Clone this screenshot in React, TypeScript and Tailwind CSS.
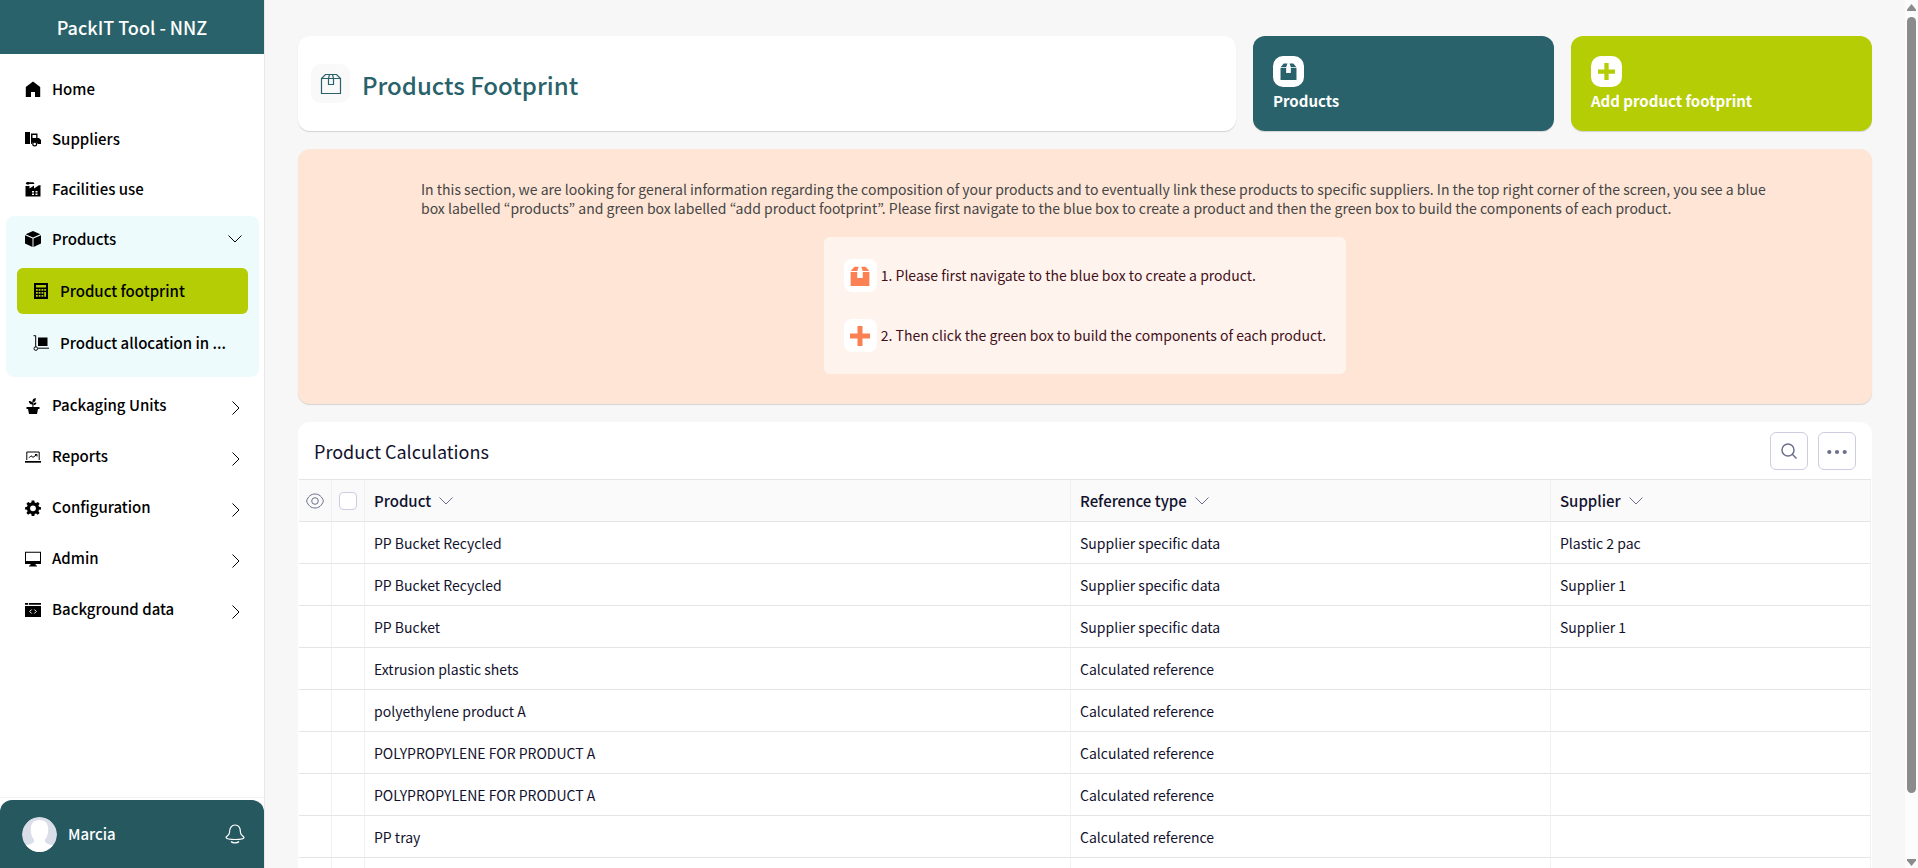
import React from "react";

type IconProps = { className?: string };

const svg = (className: string | undefined, children: React.ReactNode, box = 16) => (
  <svg viewBox={`0 0 ${box} ${box}`} className={className} fill="currentColor" aria-hidden="true">
    {children}
  </svg>
);

const HomeIcon = ({ className }: IconProps) => svg(className, <path d="M8 0.6 15.2 6v10H10v-5H6v5H.8V6z" />);

const TruckIcon = ({ className }: IconProps) =>
  svg(
    className,
    <>
      <path d="M0 1h5v12H0z" />
      <path fillRule="evenodd" d="M6 2.5h6.5V7H14l2 2v4h-3.200a3.400 3.400 0 0 0-6.300 0H6zM7.500 4v3h3.700V4z" />
      <circle cx="9.700" cy="13" r="1.900" fill="none" stroke="currentColor" strokeWidth="1.200" />
    </>,
  );

const FactoryIcon = ({ className }: IconProps) =>
  svg(
    className,
    <>
      <path d="M.8 2.500C.8 1 3 .6 4 1.200h4.500L9.500 3H4.500C4 3.600 1.500 4 .8 2.500z" />
      <path fillRule="evenodd" d="M.5 5h4v2.500L9 4.500v3L13.500 4.500l2-.5v11.500H.5zM7 10v1.600h2V10zm3.500 0v1.600h2V10zM7 12.400V14h2v-1.600zm3.500 0V14h2v-1.600z" />
    </>,
  );

const BoxIcon = ({ className }: IconProps) =>
  svg(
    className,
    <>
      <path d="M8 0l7.300 3.200L8 6.600.7 3.200z" />
      <path d="M0 4.200l7.500 3.400V16L0 12.400z" />
      <path d="M16 4.200L8.500 7.600V16L16 12.400z" />
    </>,
  );

const CalculatorIcon = ({ className }: IconProps) =>
  svg(
    className,
    <path
      fillRule="evenodd"
      d="M1 0h14v16H1zM3 2v2.500h10V2zM3 6v1.800h1.800V6zm2.700 0v1.800h1.800V6zm2.800 0v1.800h1.800V6zm2.700 0v1.800H13V6zM3 9v1.800h1.800V9zm2.700 0v1.800h1.800V9zm2.800 0v1.800h1.800V9zM3 12v1.800h1.800V12zm2.700 0v1.800h1.800V12zm2.800 0v1.800h1.800V12zm2.700-3v4.800H13V9z"
    />,
  );

const TrolleyIcon = ({ className }: IconProps) =>
  svg(
    className,
    <>
      <path d="M5 2.500h9.500V11H5z" />
      <path d="M.5.7h2.200v11.500M5 13.200h11" fill="none" stroke="currentColor" />
      <circle cx="2.800" cy="13.600" r="1.800" fill="none" stroke="currentColor" />
    </>,
  );

const PlantIcon = ({ className }: IconProps) =>
  svg(
    className,
    <>
      <path d="M1.500 9h13v2H13l-1 5H4l-1-5H1.500z" />
      <path d="M7.400 9V6.500C5 6.500 4 5.200 3.800 3c2 0 3 .6 3.600 1.700V3.500C7.400 1.500 8.500.3 10.800 0c.2 2.500-.8 4-2.400 4.300V9z" />
      <path d="M8.400 6c.6-1.200 1.500-1.600 3-1.600-.2 1.700-1.200 2.700-3 2.800z" />
    </>,
  );

const ReportsIcon = ({ className }: IconProps) =>
  svg(
    className,
    <>
      <path d="M0 12h16v1.700H0z" />
      <path d="M1.800 11V3h12.400v8M4 8.800l2-2 2 1.500L12 5.500M10 5.500h2v2" fill="none" stroke="currentColor" />
    </>,
  );

const GearIcon = ({ className }: IconProps) =>
  svg(
    className,
    <path
      fillRule="evenodd"
      d="M6.700.5h2.600l.4 2 1.300.6 1.800-1.200 1.800 1.800-1.200 1.800.6 1.300 2 .4v2.200l-2 .4-.6 1.400 1.200 1.700-1.800 1.800-1.800-1.200-1.300.6-.4 2H6.700l-.4-2-1.300-.6-1.800 1.200-1.800-1.800 1.200-1.700L2 9.800l-1.900-.4V7.200L2 6.800l.6-1.300-1.200-1.800 1.800-1.800L5 3.100l1.300-.6zM8 5.400a2.900 2.900 0 1 0 0 5.800 2.900 2.900 0 0 0 0-5.800z"
    />,
  );

const MonitorIcon = ({ className }: IconProps) =>
  svg(className, <path fillRule="evenodd" d="M0 .8h16V13h-5.500l.3 1.500H12v1H4v-1h1.200L5.500 13H0zM1 1.800V10h14V1.800z" />);

const CodeIcon = ({ className }: IconProps) =>
  svg(
    className,
    <>
      <path d="M0 1h3.200v1.800H0zM4 1h12v1.800H4z" />
      <path d="M0 4h16v11H0z" />
      <path d="M6.700 7.500l-2 2 2 2M9.300 7.500l2 2-2 2" fill="none" stroke="#fff" />
    </>,
  );

const PackageIcon = ({ className }: IconProps) =>
  svg(
    className,
    <>
      <path d="M3.500.5H7L5.800 4H.5zM12.500.5H9L10.200 4h5.300z" />
      <path d="M.5 4.800h5.300V9.500h4.400V4.800h5.300V16H.5z" />
    </>,
  );

const PlusIcon = ({ className }: IconProps) => svg(className, <path d="M6 0h4v6h6v4h-6v6H6v-6H0V6h6z" />);

const OutlinePackageIcon = ({ className }: IconProps) => (
  <svg viewBox="0 0 22 22" className={className} fill="none" stroke="currentColor" strokeWidth="1.200" aria-hidden="true">
    <path d="M1.500 5.500h19v15h-19zM1.500 5.500l4-4h11l4 4M9.500 1.500l-1 4v6h5v-6l-1-4" />
  </svg>
);

const Chevron = ({ className }: IconProps) => (
  <svg viewBox="0 0 14 14" className={className} fill="none" stroke="currentColor" aria-hidden="true">
    <path d="M.5 3.500L7 10l6.500-6.500" />
  </svg>
);

type NavEntry = { label: string; Icon: (p: IconProps) => React.ReactElement };

const topItems: NavEntry[] = [
  { label: "Home", Icon: HomeIcon },
  { label: "Suppliers", Icon: TruckIcon },
  { label: "Facilities use", Icon: FactoryIcon },
];

const bottomItems: NavEntry[] = [
  { label: "Packaging Units", Icon: PlantIcon },
  { label: "Reports", Icon: ReportsIcon },
  { label: "Configuration", Icon: GearIcon },
  { label: "Admin", Icon: MonitorIcon },
  { label: "Background data", Icon: CodeIcon },
];

const rows: [string, string, string][] = [
  ["PP Bucket Recycled", "Supplier specific data", "Plastic 2 pac"],
  ["PP Bucket Recycled", "Supplier specific data", "Supplier 1"],
  ["PP Bucket", "Supplier specific data", "Supplier 1"],
  ["Extrusion plastic shets", "Calculated reference", ""],
  ["polyethylene product A", "Calculated reference", ""],
  ["POLYPROPYLENE FOR PRODUCT A", "Calculated reference", ""],
  ["POLYPROPYLENE FOR PRODUCT A", "Calculated reference", ""],
  ["PP tray", "Calculated reference", ""],
  ["", "", ""],
];

function Sidebar() {
  return (
    <aside className="flex w-[265px] shrink-0 flex-col border-r border-[#e8e8e8] bg-white font-medium text-black">
      <div className="flex h-[54px] shrink-0 items-center justify-center bg-[#29626a] pb-px text-lg text-white">PackIT Tool - NNZ</div>
      <nav className="flex min-h-0 flex-1 flex-col pt-[10px] text-[15px]">
        {topItems.map(({ label, Icon }) => (
          <a key={label} href="#" className="flex h-[50px] items-center gap-[11px] pl-[25px]">
            <Icon className="size-4" />
            {label}
          </a>
        ))}
        <div className="mt-[2px] mr-[5px] ml-[6px] h-[161px] rounded-lg bg-[#eefbfc] px-[11px]">
          <button type="button" className="flex h-[46px] w-full items-center gap-[11px] pr-[6px] pl-2 text-left">
            <BoxIcon className="size-4" />
            <span className="flex-1">Products</span>
            <Chevron className="size-[14px]" />
          </button>
          <a href="#" className="mt-[6px] flex h-[46px] items-center gap-[11px] rounded-md bg-[#b4cd05] px-4">
            <CalculatorIcon className="size-4" />
            Product footprint
          </a>
          <a href="#" className="mt-[6px] flex h-[46px] items-center gap-[11px] px-4">
            <TrolleyIcon className="size-4 shrink-0" />
            Product allocation in ...
          </a>
        </div>
        <div className="pt-[3px]">
          {bottomItems.map(({ label, Icon }) => (
            <button key={label} type="button" className="flex h-[51px] w-full items-center gap-[11px] pr-[21px] pl-[25px] text-left">
              <Icon className="size-4" />
              <span className="flex-1">{label}</span>
              <Chevron className="mt-1 size-[14px] -rotate-90" />
            </button>
          ))}
        </div>
      </nav>
      <div className="shrink-0 border-t border-[#f3f3f3] pt-[2px]">
        <div className="flex h-[68px] items-center gap-[11px] rounded-t-xl bg-[#26585f] pr-[19px] pl-[22px] text-[15px] text-white">
          <svg viewBox="0 0 36 36" className="size-[35px] rounded-full" aria-hidden="true">
            <circle cx="18" cy="18" r="18" fill="#dadee9" />
            <path d="M18 3c6.500 0 9 4 9 9.500 0 5-1.500 8.500-3.500 11 0 3.500 3 5 8.500 5.500L28 36H8l-4-7c5.500-.5 8.500-2 8.500-5.500-2-2.500-3.500-6-3.500-11C9 7 11.500 3 18 3z" fill="#fff" />
          </svg>
          <span className="flex-1">Marcia</span>
          <button type="button" aria-label="Notifications">
            <svg viewBox="0 0 20 20" className="size-5" fill="none" stroke="currentColor" strokeWidth="1.200" aria-hidden="true">
              <path d="M4.500 8.500C4.500 4 6.500 1 10 1s5.500 3 5.500 7.500c0 3 3.500 3.500 3.500 5 0 1.200-4 2-9 2s-9-.8-9-2c0-1.500 3.500-2 3.500-5zM6 17.500c1.500 1.800 6.500 1.800 8 0" />
            </svg>
          </button>
        </div>
      </div>
    </aside>
  );
}

function ActionCard({ label, Icon, tone }: { label: string; Icon: (p: IconProps) => React.ReactElement; tone: string }) {
  return (
    <button
      type="button"
      className={`flex flex-col items-start gap-[2px] rounded-xl px-5 pt-5 text-left text-[15px] leading-6 font-bold shadow-[0_1px_1px_rgba(0,0,0,0.15)] ${tone}`}
    >
      <span className="flex size-[31px] items-center justify-center rounded-[10px] bg-white">
        <Icon className="size-[17px]" />
      </span>
      <span className="text-white">{label}</span>
    </button>
  );
}

function Step({ text, Icon }: { text: string; Icon: (p: IconProps) => React.ReactElement }) {
  return (
    <li className="flex items-center gap-1">
      <span className="flex size-[33px] items-center justify-center rounded-lg bg-white text-[#fb8155]">
        <Icon className="size-5" />
      </span>
      {text}
    </li>
  );
}

function HeaderCell({ label }: { label: string }) {
  return (
    <th className="border-r border-[#f1f1f3] px-[9px] text-left text-[15px] font-medium">
      <span className="flex items-center gap-2">
        {label}
        <Chevron className="size-[14px] text-[#6c6f8d]" />
      </span>
    </th>
  );
}

function Calculations() {
  return (
    <section className="rounded-t-xl bg-white px-px text-[#12122e]">
      <div className="flex h-[57px] items-center gap-[10px] px-[15px]">
        <h2 className="flex-1 text-lg">Product Calculations</h2>
        <button type="button" aria-label="Search" className="flex size-[38px] items-center justify-center rounded-md border border-[#cfcce0] text-[#6c6f8d]">
          <svg viewBox="0 0 16 16" className="size-4" fill="none" stroke="currentColor" strokeWidth="1.500" aria-hidden="true">
            <circle cx="7" cy="7" r="6" />
            <path d="M11.300 11.300L15.500 15.500" />
          </svg>
        </button>
        <button type="button" aria-label="More" className="flex size-[38px] items-center justify-center rounded-md border border-[#cfcce0] text-[#6c6f8d]">
          <svg viewBox="0 0 20 20" className="size-5" fill="currentColor" aria-hidden="true">
            <circle cx="2.300" cy="11" r="2.100" />
            <circle cx="10" cy="11" r="2.100" />
            <circle cx="17.700" cy="11" r="2.100" />
          </svg>
        </button>
      </div>
      <table className="w-full table-fixed border-separate border-spacing-0 border-t border-[#e4e5e9] text-[14px] leading-5">
        <colgroup>
          <col className="w-[33px]" />
          <col className="w-[33px]" />
          <col className="w-[45%]" />
          <col className="w-[480px]" />
          <col className="w-[320px]" />
        </colgroup>
        <thead className="bg-[#fafafa]">
          <tr className="h-[42px] [&>th]:border-b [&>th]:border-b-[#e4e5e9]">
            <th className="border-r border-[#f1f1f3]" aria-label="Visible columns">
              <svg viewBox="0 0 18 16" className="mx-auto h-4 w-[18px] text-[#6c6f8d]" fill="none" stroke="currentColor" aria-hidden="true">
                <path d="M.6 8C2 3.500 5 1 9 1s7 2.500 8.400 7C16 12.500 13 15 9 15S2 12.500.6 8z" />
                <circle cx="9" cy="8" r="3.300" />
              </svg>
            </th>
            <th className="border-r border-[#f1f1f3]">
              <input type="checkbox" aria-label="Select all rows" className="mx-auto block size-[18px] appearance-none rounded-sm border border-[#cfcce0] bg-white" />
            </th>
            <HeaderCell label="Product" />
            <HeaderCell label="Reference type" />
            <HeaderCell label="Supplier" />
          </tr>
        </thead>
        <tbody>
          {rows.map((row, i) => (
            <tr key={i} className="h-[42px] [&>td]:border-r [&>td]:border-b [&>td]:border-r-[#f1f1f3] [&>td]:border-b-[#e4e5e9]">
              <td />
              <td />
              {row.map((cell, j) => (
                <td key={j} className="px-[9px]">
                  {cell}
                </td>
              ))}
            </tr>
          ))}
        </tbody>
      </table>
    </section>
  );
}

export default function App() {
  return (
    <div className="flex h-screen overflow-hidden bg-[#f7f7f7] font-['Noto_Sans_CJK_KR','Noto_Sans',sans-serif]">
      <Sidebar />
      <main className="flex min-w-0 flex-1 flex-col gap-[18px] overflow-hidden px-[33px] pt-9">
        <header className="grid h-[95px] shrink-0 grid-cols-[minmax(0,1fr)_301px_301px] gap-[17px]">
          <div className="flex items-center gap-3 rounded-xl bg-white px-[13px] shadow-[0_1px_1px_rgba(0,0,0,0.15)]">
            <span className="flex size-[39px] items-center justify-center rounded-[10px] bg-[#f9f9f9] text-[#29626a]">
              <OutlinePackageIcon className="size-[22px]" />
            </span>
            <h1 className="pt-[2px] text-2xl font-medium text-[#29626a]">Products Footprint</h1>
          </div>
          <ActionCard label="Products" Icon={PackageIcon} tone="bg-[#29626a] text-[#29626a]" />
          <ActionCard label="Add product footprint" Icon={PlusIcon} tone="bg-[#b4cd05] text-[#b4cd05]" />
        </header>
        <section className="flex shrink-0 flex-col items-center gap-[19px] rounded-xl bg-[#fee5d5] px-[98px] pt-[31px] pb-[30px] text-[14px] leading-[19px] shadow-[0_1px_1px_rgba(0,0,0,0.15)]">
          <p className="pl-[25px] text-[#454545]">
            In this section, we are looking for general information regarding the composition of your products and to eventually link these products to specific suppliers. In the top right corner of the screen, you see a blue box labelled “products” and green box labelled “add product footprint”. Please first navigate to the blue box to create a product and then the green box to build the components of each product.
          </p>
          <ol className="flex flex-col gap-[27px] rounded-md bg-[#fff3ed] px-5 py-[22px] text-[#42101a]">
            <Step text="1. Please first navigate to the blue box to create a product." Icon={PackageIcon} />
            <Step text="2. Then click the green box to build the components of each product." Icon={PlusIcon} />
          </ol>
        </section>
        <Calculations />
      </main>
      <div className="flex w-[13px] shrink-0 flex-col items-center justify-between bg-[#fcfcfc] pt-1 pb-[2px]" aria-hidden="true">
        <svg viewBox="0 0 9 7" className="w-[9px]" fill="#8b8b8b">
          <path d="M4.500 0L9 5.500V7H0V5.500z" />
        </svg>
        <div className="mt-[6px] mb-auto h-[90%] w-[9px] rounded-full bg-[#8b8b8b]" />
        <svg viewBox="0 0 9 7" className="w-[9px]" fill="#8b8b8b">
          <path d="M0 0h9v1.500L4.500 7 0 1.500z" />
        </svg>
      </div>
    </div>
  );
}
